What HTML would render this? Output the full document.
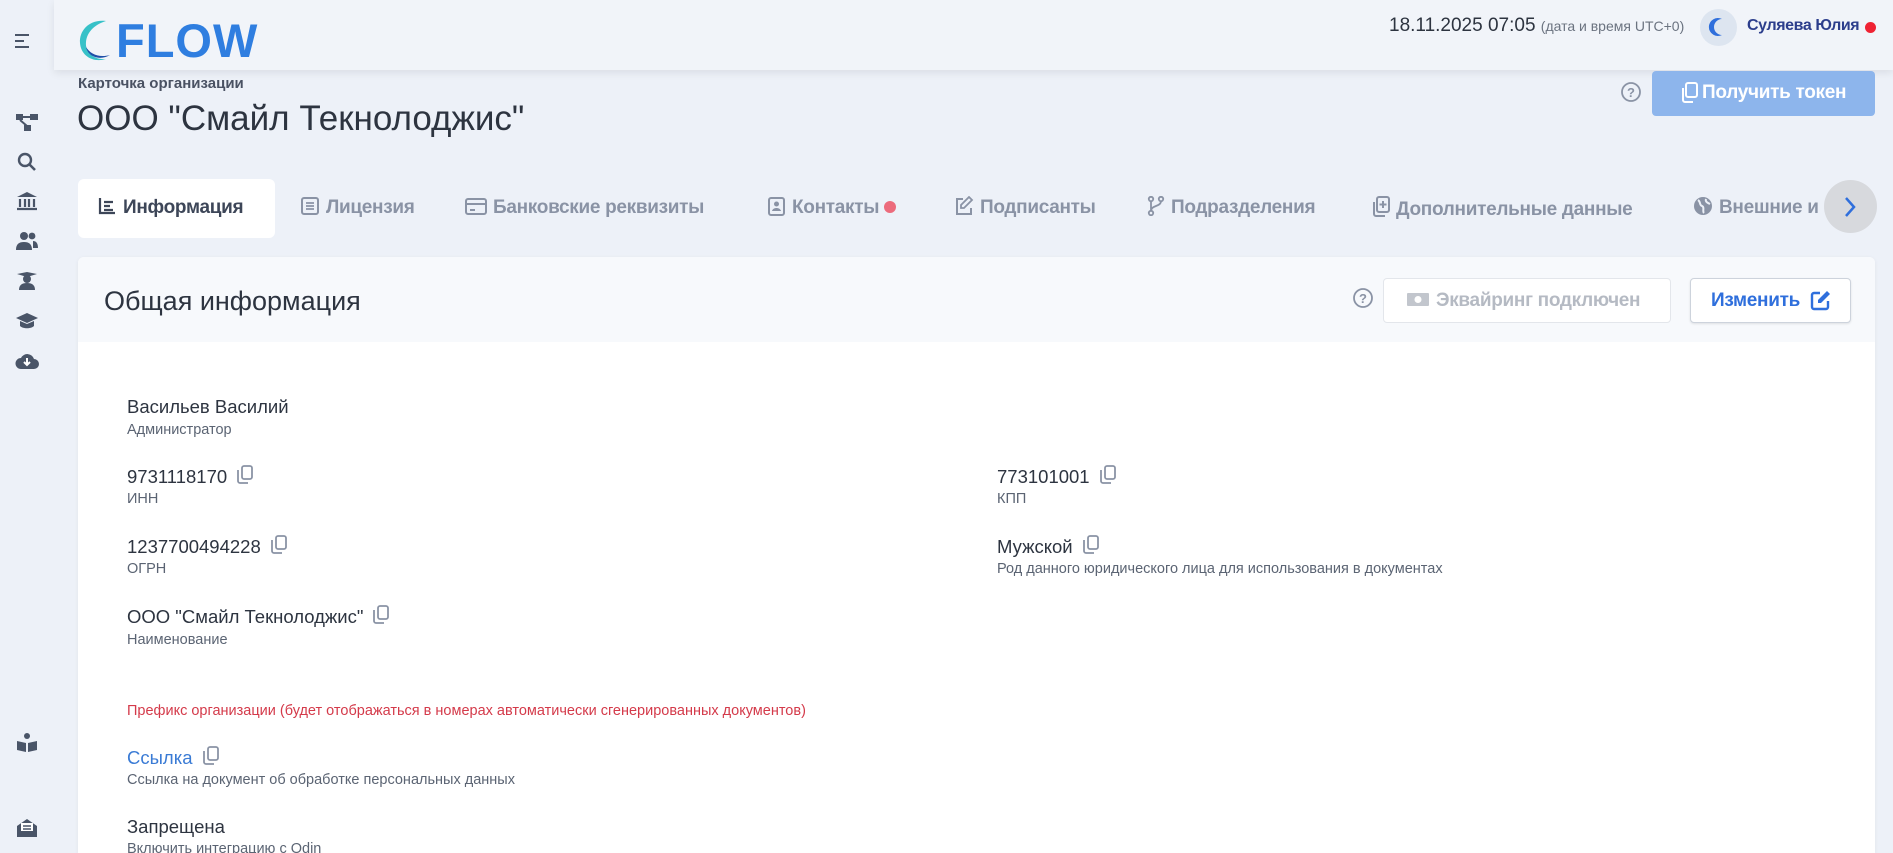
<!DOCTYPE html>
<html style="width:1893px;height:853px;overflow:hidden"><head><meta charset="utf-8"><style>
*{margin:0;padding:0;box-sizing:border-box}
body{width:1893px;height:853px;overflow:hidden;background:#edf1f8;font-family:"Liberation Sans","Noto Sans CJK SC",sans-serif;position:relative;color:#2d3440}
.a{position:absolute;white-space:nowrap}
.side{position:absolute;left:0;top:0;width:54px;height:853px;background:#edf1f8}
.hdr{position:absolute;left:54px;top:0;width:1839px;height:70px;background:#f1f4f9;box-shadow:0 3px 8px rgba(0,0,0,.08)}
.tab{position:absolute;top:196px;height:24px;line-height:24px;font-size:19px;font-weight:bold;color:#8a93a5;white-space:nowrap;letter-spacing:-.3px}
.tab svg{display:inline-block;vertical-align:-3px;margin-right:6px}
.card{position:absolute;left:78px;top:257px;width:1797px;height:596px;background:#fff;border-radius:6px 6px 0 0;box-shadow:0 1px 4px rgba(0,0,0,.06)}
.ch{position:absolute;left:0;top:0;width:100%;height:85px;background:#f7f9fc;border-radius:6px 6px 0 0}
.v{position:absolute;font-size:18.5px;color:#2d3440;white-space:nowrap}
.l{position:absolute;font-size:14.5px;color:#5b6473;white-space:nowrap}
.cp{display:inline-block;vertical-align:-2px;margin-left:9px}
.si{position:absolute;left:15px;width:24px;height:20px}
</style></head><body>
<div class="side">
 <svg class="a" style="left:14px;top:33px" width="18" height="16"><path d="M1 2h14M1 8h9M1 14h14" stroke="#4a5568" stroke-width="2"/></svg>
 <svg class="si" style="top:112px" viewBox="0 0 24 20"><rect x="1" y="2" width="7" height="6" fill="#4a5568"/><rect x="15" y="2" width="8" height="6" fill="#4a5568"/><rect x="9" y="13" width="7" height="6" fill="#4a5568"/><path d="M5 8l7 6M8 5h7" stroke="#4a5568" stroke-width="2"/></svg>
 <svg class="si" style="top:152px" viewBox="0 0 24 20"><circle cx="10" cy="8" r="6" fill="none" stroke="#4a5568" stroke-width="2.4"/><path d="M14 12l6 6" stroke="#4a5568" stroke-width="2.6"/></svg>
 <svg class="si" style="top:191px" viewBox="0 0 24 20"><path d="M12 1l10 5H2z" fill="#4a5568"/><path d="M5 8v8M10 8v8M14 8v8M19 8v8M2 18h20" stroke="#4a5568" stroke-width="2.2"/></svg>
 <svg class="si" style="top:231px" viewBox="0 0 24 20"><circle cx="9" cy="5" r="4" fill="#4a5568"/><circle cx="17" cy="5" r="3.4" fill="#4a5568"/><path d="M1 19c0-6 3-8 8-8s8 2 8 8zM18 10c3 0 5 2 5 7h-5z" fill="#4a5568"/></svg>
 <svg class="si" style="top:271px" viewBox="0 0 24 20"><path d="M2 3l10-2 10 2-10 3z" fill="#4a5568"/><circle cx="12" cy="8" r="4" fill="#4a5568"/><path d="M4 19c0-5 3-7 8-7s8 2 8 7z" fill="#4a5568"/></svg>
 <svg class="si" style="top:311px" viewBox="0 0 24 20"><path d="M12 2L1 7l11 5 11-5z" fill="#4a5568"/><path d="M5 10v5c3 3 11 3 14 0v-5l-7 3z" fill="#4a5568"/></svg>
 <svg class="si" style="top:351px" viewBox="0 0 24 20"><path d="M6 18h13a5 5 0 000-10 7 7 0 00-13-1 5 5 0 000 11z" fill="#4a5568"/><path d="M12 7v7M9 11l3 3 3-3" stroke="#fff" stroke-width="2" fill="none"/></svg>
 <svg class="si" style="top:733px" viewBox="0 0 24 20"><circle cx="12" cy="3" r="3" fill="#4a5568"/><path d="M2 8l9 2v9l-9-2zM22 8l-9 2v9l9-2z" fill="#4a5568"/></svg>
 <svg class="si" style="top:818px" viewBox="0 0 24 20"><path d="M2 8l10-7 10 7v11H2z" fill="#4a5568"/><rect x="6" y="5" width="12" height="8" fill="#fff"/><path d="M8 8h8M8 11h8" stroke="#4a5568" stroke-width="1.5"/></svg>
</div>
<div class="hdr"></div>
<svg class="a" style="left:76px;top:18px" width="40" height="46" viewBox="0 0 40 46"><path d="M30 3C14 1 3 12 4 25c1 13 13 20 26 16C17 42 9 34 10 24 11 13 20 6 30 3z" fill="#37c1c8"/><path d="M34 37c-10 6-22 2-24-8 4 7 13 11 24 8z" fill="#1f4fa8"/></svg>
<div class="a" style="left:116px;top:13px;font-size:47px;font-weight:bold;color:#2f7ee0;letter-spacing:1px">FLOW</div>
<div class="a" style="left:1389px;top:15px;font-size:19px;color:#2d3440">18.11.2025 07:05 <span style="font-size:14px;color:#6b7380">(дата и время UTC+0)</span></div>
<div class="a" style="left:1700px;top:9px;width:37px;height:37px;border-radius:50%;background:#dde5f0"></div>
<svg class="a" style="left:1708px;top:16px" width="22" height="22" viewBox="0 0 22 22"><path d="M14 3a9 9 0 100 16A8 8 0 0114 3z" fill="#2f6fdc"/></svg>
<div class="a" style="left:1747px;top:17px;font-size:16px;font-weight:bold;color:#2c3e8c;letter-spacing:-.4px">Суляева Юлия</div>
<div class="a" style="left:1865px;top:22px;width:11px;height:11px;border-radius:50%;background:#ef2233"></div>

<div class="a" style="left:78px;top:75px;font-size:15px;font-weight:bold;color:#4a5263">Карточка организации</div>
<div class="a" style="left:77px;top:99px;font-size:35px;color:#2d3440">ООО "Смайл Текнолоджис"</div>
<svg class="a" style="left:1620px;top:81px" width="22" height="22"><circle cx="11" cy="11" r="9" fill="none" stroke="#8a93a5" stroke-width="1.8"/><text x="11" y="16" font-size="13" font-weight="bold" text-anchor="middle" fill="#8a93a5" font-family="Liberation Sans">?</text></svg>
<div class="a" style="left:1652px;top:71px;width:223px;height:45px;background:#8db5ec;border-radius:4px;color:#fff;font-size:19px;font-weight:bold;padding:11px 0 0 50px;letter-spacing:-.3px">Получить токен</div>
<svg class="a" style="left:1681px;top:82px" width="18" height="22" viewBox="0 0 18 22"><rect x="5" y="1" width="11" height="14" rx="2" fill="none" stroke="#fff" stroke-width="2"/><path d="M2 6v12a2 2 0 002 2h8" fill="none" stroke="#fff" stroke-width="2"/></svg>

<div class="a" style="left:78px;top:179px;width:197px;height:59px;background:#fff;border-radius:6px"></div>
<div class="tab" style="left:97px;color:#3d4658"><svg width="20" height="20" viewBox="0 0 20 20"><path d="M3 2v15h15M7 6h9M7 10h6M7 14h9" stroke="#3d4658" stroke-width="2.2" fill="none"/></svg>Информация</div>
<div class="tab" style="left:300px"><svg width="20" height="20" viewBox="0 0 20 20"><rect x="2" y="2" width="16" height="16" rx="2" fill="none" stroke="#8a93a5" stroke-width="2"/><path d="M6 7h8M6 10h8M6 13h8" stroke="#8a93a5" stroke-width="1.8"/></svg>Лицензия</div>
<div class="tab" style="left:465px"><svg width="22" height="20" viewBox="0 0 22 20"><rect x="1" y="3" width="20" height="15" rx="2" fill="none" stroke="#8a93a5" stroke-width="2"/><path d="M1 8h20M5 14h5" stroke="#8a93a5" stroke-width="2"/></svg>Банковские реквизиты</div>
<div class="tab" style="left:768px"><svg width="18" height="20" viewBox="0 0 18 20"><rect x="1" y="2" width="15" height="17" rx="2" fill="none" stroke="#8a93a5" stroke-width="2"/><circle cx="8.5" cy="8" r="2.5" fill="#8a93a5"/><path d="M4 15c1-4 8-4 9 0z" fill="#8a93a5"/></svg>Контакты <span style="display:inline-block;width:12px;height:12px;border-radius:50%;background:#ec6b7c;vertical-align:0px"></span></div>
<div class="tab" style="left:954px"><svg width="20" height="20" viewBox="0 0 20 20"><path d="M9 3H3v15h14v-6" fill="none" stroke="#8a93a5" stroke-width="2"/><path d="M15 1l3 3-8 8H7V9z" fill="none" stroke="#8a93a5" stroke-width="1.8"/></svg>Подписанты</div>
<div class="tab" style="left:1147px"><svg width="18" height="20" viewBox="0 0 18 20"><circle cx="4" cy="3" r="2.2" fill="none" stroke="#8a93a5" stroke-width="1.8"/><circle cx="14" cy="3" r="2.2" fill="none" stroke="#8a93a5" stroke-width="1.8"/><circle cx="4" cy="17" r="2.2" fill="none" stroke="#8a93a5" stroke-width="1.8"/><path d="M4 5v10M14 5c0 6-10 4-10 10" fill="none" stroke="#8a93a5" stroke-width="1.8"/></svg>Подразделения</div>
<div class="tab" style="left:1372px"><svg width="18" height="22" viewBox="0 0 18 22"><rect x="5" y="1" width="12" height="15" rx="2" fill="none" stroke="#8a93a5" stroke-width="2"/><path d="M2 6v12a2 2 0 002 2h9M11 5v7M7.5 8.5h7" fill="none" stroke="#8a93a5" stroke-width="2"/></svg>Дополнительные данные</div>
<div class="tab" style="left:1693px"><svg width="20" height="20" viewBox="0 0 20 20"><circle cx="10" cy="10" r="9" fill="#8a93a5"/><path d="M5 4c3 2 1 5 4 6s0 5 2 7M13 3c-1 3 2 4 4 5" fill="none" stroke="#edf1f8" stroke-width="2"/></svg>Внешние и</div>
<div class="a" style="left:1824px;top:180px;width:53px;height:53px;border-radius:50%;background:#d7d9dd"></div>
<svg class="a" style="left:1842px;top:195px" width="16" height="24"><path d="M4 3l8 9-8 9" fill="none" stroke="#2f6fdc" stroke-width="2.5"/></svg>

<div class="card"><div class="ch"></div></div>
<div class="a" style="left:104px;top:286px;font-size:27px;color:#2d3440">Общая информация</div>
<svg class="a" style="left:1352px;top:287px" width="22" height="22"><circle cx="11" cy="11" r="9" fill="none" stroke="#8a93a5" stroke-width="1.8"/><text x="11" y="16" font-size="13" font-weight="bold" text-anchor="middle" fill="#8a93a5" font-family="Liberation Sans">?</text></svg>
<div class="a" style="left:1383px;top:278px;width:288px;height:45px;background:#fff;border:1px solid #e3e6eb;border-radius:4px;color:#b5bac3;font-size:19px;font-weight:bold;padding:11px 0 0 52px;letter-spacing:-.3px">Эквайринг подключен</div>
<svg class="a" style="left:1405px;top:290px" width="26" height="20"><rect x="2" y="3" width="22" height="13" rx="1" fill="#c2c6cd"/><circle cx="13" cy="9.5" r="3.5" fill="#fff"/></svg>
<div class="a" style="left:1690px;top:278px;width:161px;height:45px;background:#fff;border:1px solid #cdd3dc;border-radius:4px;color:#2f6fdc;font-size:19px;font-weight:bold;padding:11px 0 0 20px;letter-spacing:-.3px;box-shadow:0 1px 2px rgba(0,0,0,.1)">Изменить</div>
<svg class="a" style="left:1810px;top:289px" width="22" height="22" viewBox="0 0 22 22"><path d="M10 4H4a2 2 0 00-2 2v12a2 2 0 002 2h12a2 2 0 002-2v-6" fill="none" stroke="#2f6fdc" stroke-width="2.4"/><path d="M17 2l3 3-9 9H8v-3z" fill="#2f6fdc"/></svg>

<svg width="0" height="0" style="position:absolute"><defs><symbol id="cp" viewBox="0 0 18 20"><rect x="6" y="1" width="10" height="13" rx="2" fill="none" stroke="#8a93a5" stroke-width="1.8"/><path d="M2 5v11a2 2 0 002 2h8" fill="none" stroke="#8a93a5" stroke-width="1.8"/></symbol></defs></svg>

<div class="v" style="left:127px;top:396px">Васильев Василий</div>
<div class="l" style="left:127px;top:422px">Администратор</div>
<div class="v" style="left:127px;top:465px">9731118170<svg class="cp" width="18" height="20"><use href="#cp"/></svg></div>
<div class="l" style="left:127px;top:491px">ИНН</div>
<div class="v" style="left:127px;top:535px">1237700494228<svg class="cp" width="18" height="20"><use href="#cp"/></svg></div>
<div class="l" style="left:127px;top:561px">ОГРН</div>
<div class="v" style="left:127px;top:605px">ООО "Смайл Текнолоджис"<svg class="cp" width="18" height="20"><use href="#cp"/></svg></div>
<div class="l" style="left:127px;top:632px">Наименование</div>
<div class="l" style="left:127px;top:703px;color:#d43a4a">Префикс организации (будет отображаться в номерах автоматически сгенерированных документов)</div>
<div class="v" style="left:127px;top:746px;color:#3a7bd5">Ссылка<svg class="cp" width="18" height="20"><use href="#cp"/></svg></div>
<div class="l" style="left:127px;top:772px">Ссылка на документ об обработке персональных данных</div>
<div class="v" style="left:127px;top:816px">Запрещена</div>
<div class="l" style="left:127px;top:841px">Включить интеграцию с Odin</div>

<div class="v" style="left:997px;top:465px">773101001<svg class="cp" width="18" height="20"><use href="#cp"/></svg></div>
<div class="l" style="left:997px;top:491px">КПП</div>
<div class="v" style="left:997px;top:535px">Мужской<svg class="cp" width="18" height="20"><use href="#cp"/></svg></div>
<div class="l" style="left:997px;top:561px">Род данного юридического лица для использования в документах</div>
</body></html>
